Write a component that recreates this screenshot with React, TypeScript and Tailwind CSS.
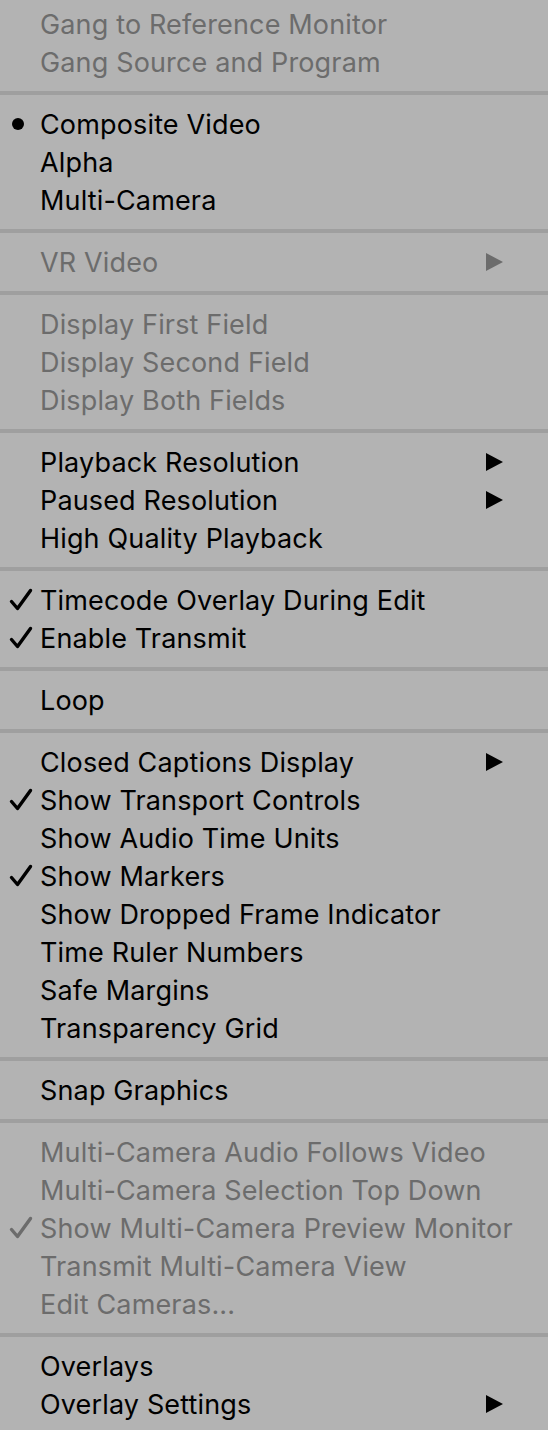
type Item = {
  label: string;
  disabled?: boolean;
  mark?: "check" | "dot";
  submenu?: boolean;
};

type Group = Item[];

const groups: Group[] = [
  [
    { label: "Gang to Reference Monitor", disabled: true },
    { label: "Gang Source and Program", disabled: true },
  ],
  [
    { label: "Composite Video", mark: "dot" },
    { label: "Alpha" },
    { label: "Multi-Camera" },
  ],
  [{ label: "VR Video", disabled: true, submenu: true }],
  [
    { label: "Display First Field", disabled: true },
    { label: "Display Second Field", disabled: true },
    { label: "Display Both Fields", disabled: true },
  ],
  [
    { label: "Playback Resolution", submenu: true },
    { label: "Paused Resolution", submenu: true },
    { label: "High Quality Playback" },
  ],
  [
    { label: "Timecode Overlay During Edit", mark: "check" },
    { label: "Enable Transmit", mark: "check" },
  ],
  [{ label: "Loop" }],
  [
    { label: "Closed Captions Display", submenu: true },
    { label: "Show Transport Controls", mark: "check" },
    { label: "Show Audio Time Units" },
    { label: "Show Markers", mark: "check" },
    { label: "Show Dropped Frame Indicator" },
    { label: "Time Ruler Numbers" },
    { label: "Safe Margins" },
    { label: "Transparency Grid" },
  ],
  [{ label: "Snap Graphics" }],
  [
    { label: "Multi-Camera Audio Follows Video", disabled: true },
    { label: "Multi-Camera Selection Top Down", disabled: true },
    { label: "Show Multi-Camera Preview Monitor", disabled: true, mark: "check" },
    { label: "Transmit Multi-Camera View", disabled: true },
    { label: "Edit Cameras...", disabled: true },
  ],
  [
    { label: "Overlays" },
    { label: "Overlay Settings", submenu: true },
  ],
];

function Mark({ kind }: { kind?: "check" | "dot" }) {
  if (kind === "dot") {
    return <span className="ml-[12px] block size-[12px] rounded-full bg-current" />;
  }
  if (kind === "check") {
    return (
      <svg viewBox="0 0 24 24" className="ml-[9px] size-[24px]" fill="none">
        <path
          d="M2.5 13.5 L8.5 20.5 L21.5 2.5"
          stroke="currentColor"
          strokeWidth="3.4"
          strokeLinecap="round"
          strokeLinejoin="round"
        />
      </svg>
    );
  }
  return null;
}

function MenuRow({ item }: { item: Item }) {
  return (
    <div
      className={`flex h-[38px] items-center ${
        item.disabled ? "text-[#6c6c6c]" : "text-black"
      }`}
    >
      <div className="flex w-[40px] shrink-0 items-center">
        <Mark kind={item.mark} />
      </div>
      <span className="flex-grow whitespace-nowrap">{item.label}</span>
      {item.submenu && (
        <svg viewBox="0 0 18 18" className="mr-[45px] h-[18px] w-[17px]" preserveAspectRatio="none">
          <path d="M0 0 L18 9 L0 18 Z" fill="currentColor" />
        </svg>
      )}
    </div>
  );
}

export default function App() {
  return (
    <div
      className="h-[1430px] w-[548px] overflow-hidden bg-[#b3b3b3] pt-[5px] text-[27px] leading-none tracking-[0.15px]"
      style={{ fontFamily: "Inter, 'Liberation Sans', sans-serif" }}
    >
      {groups.map((group, gi) => (
        <div key={gi}>
          {gi > 0 && <div className="my-[10px] h-[4px] bg-[#9f9f9f]" />}
          {group.map((item) => (
            <MenuRow key={item.label} item={item} />
          ))}
        </div>
      ))}
    </div>
  );
}
